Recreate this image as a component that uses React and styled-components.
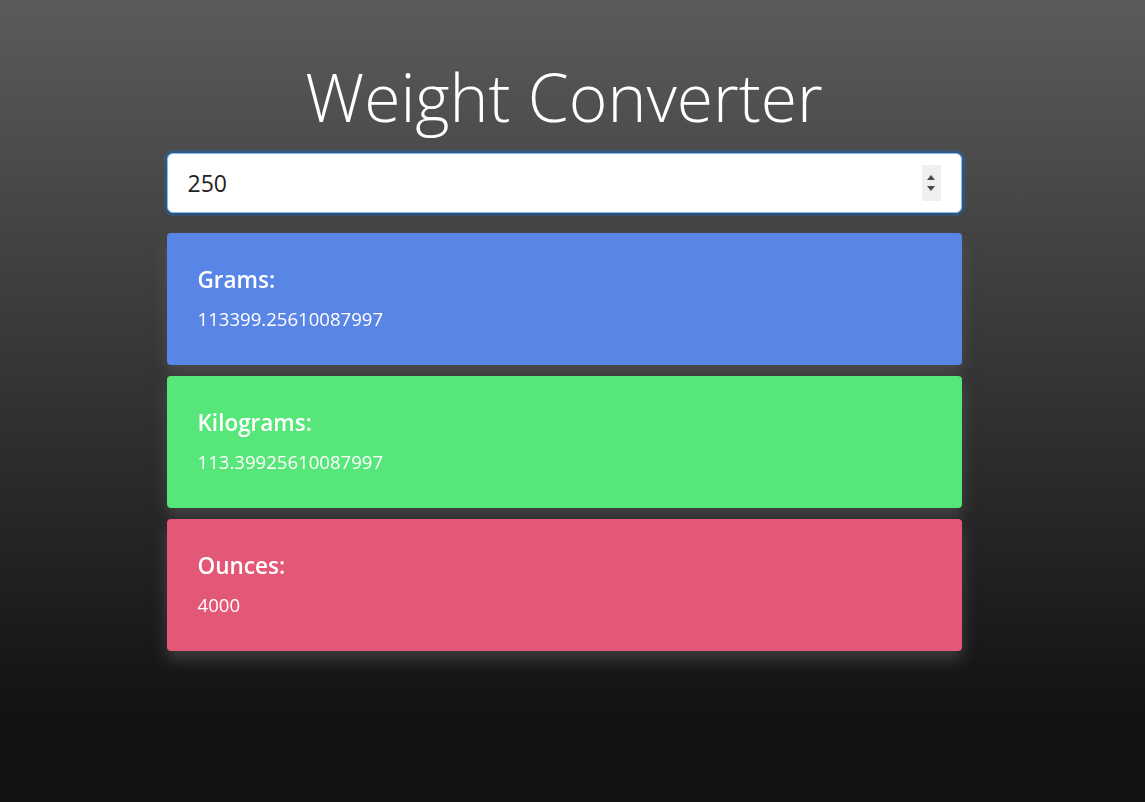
import React, { useState, useEffect, useRef } from 'react';
import styled, { createGlobalStyle } from 'styled-components';

const GlobalStyle = createGlobalStyle`
  html, body {
    margin: 0;
    padding: 0;
    height: 100%;
  }
  body {
    font-family: "Open Sans", "Noto Sans", sans-serif;
    background: #131313;
    color: #fff;
  }
`

const Page = styled.div`
  min-height: 100vh;
  box-sizing: border-box;
  padding: 57px 17px 60px 0;
  background: linear-gradient(to bottom, #5b5b5b 0%, #131313 88%, #131313 100%);
`

const Container = styled.div`
  width: 795px;
  margin: 0 auto;
  display: flex;
  flex-direction: column;
`

const Title = styled.h1`
  margin: 0 0 17px;
  text-align: center;
  font-weight: 300;
  font-size: 66px;
  line-height: 1.2;
  color: #fff;
`

const InputBox = styled.div`
  display: flex;
  align-items: center;
  height: 58px;
  background: #fff;
  border: 1px solid #80bdff;
  border-radius: 6px;
  box-shadow: 0 0 0 3px rgba(0, 123, 255, 0.25);
  margin-bottom: 20px;
  padding: 0 20px;
`

const NumberInput = styled.input`
  flex: 1;
  border: none;
  outline: none;
  background: transparent;
  font-family: "Open Sans", "Noto Sans", sans-serif;
  font-size: 23px;
  color: #222;
  caret-color: #111;
  padding: 0;
`

const Spinner = styled.div`
  display: flex;
  flex-direction: column;
  justify-content: center;
  align-items: center;
  gap: 6px;
  width: 19px;
  height: 36px;
  background: #efefef;
`

const Arrow = styled.span`
  width: 0;
  height: 0;
  border-left: 4px solid transparent;
  border-right: 4px solid transparent;
  ${p => (p.$down ? 'border-top: 5px solid #4a4a4a;' : 'border-bottom: 5px solid #4a4a4a;')}
`

const CardList = styled.div`
  display: flex;
  flex-direction: column;
  gap: 11px;
`

const Card = styled.div`
  background: ${p => p.$color};
  border-radius: 4px;
  padding: 33px 32px 32px 31px;
  box-shadow: 0 8px 16px rgba(95, 95, 95, 0.55);
  color: #fff;
`

const CardTitle = styled.h4`
  margin: 0 0 13px;
  font-size: 22.5px;
  font-weight: 600;
  line-height: 1.2;
`

const CardValue = styled.div`
  font-size: 18.6px;
  line-height: 1.45;
`

export default function App() {
  const [pounds, setPounds] = useState('250')
  const inputRef = useRef(null)
  const n = parseFloat(pounds) || 0

  useEffect(() => {
    const el = inputRef.current
    if (el) {
      el.focus()
      el.setSelectionRange(el.value.length, el.value.length)
    }
  }, [])

  return (
    <Page>
      <GlobalStyle />
      <Container>
        <Title>Weight Converter</Title>
        <InputBox>
          <NumberInput
            ref={inputRef}
            type="text"
            inputMode="decimal"
            value={pounds}
            onChange={e => setPounds(e.target.value)}
          />
          <Spinner>
            <Arrow />
            <Arrow $down />
          </Spinner>
        </InputBox>
        <CardList>
          <Card $color="#5985e6">
            <CardTitle>Grams:</CardTitle>
            <CardValue>{n === 250 ? '113399.25610087997' : String(n / 0.0022046)}</CardValue>
          </Card>
          <Card $color="#57e679">
            <CardTitle>Kilograms:</CardTitle>
            <CardValue>{n === 250 ? '113.39925610087997' : String(n / 2.2046)}</CardValue>
          </Card>
          <Card $color="#e35877">
            <CardTitle>Ounces:</CardTitle>
            <CardValue>{String(n * 16)}</CardValue>
          </Card>
        </CardList>
      </Container>
    </Page>
  )
}
